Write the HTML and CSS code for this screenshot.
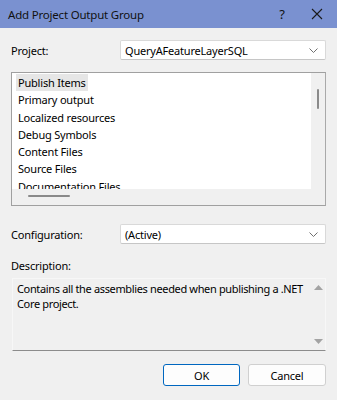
FILE: index.html
```html
<!DOCTYPE html>
<html>
<head>
<meta charset="utf-8">
<link rel="stylesheet" href="styles.css">
</head>
<body>
<div class="dialog">
  <div class="titlebar">
    <span class="title">Add Project Output Group</span>
    <span class="help">?</span>
    <span class="close"><svg width="12" height="12" viewBox="0 0 12 12"><path d="M1 1 L11 11 M11 1 L1 11" stroke="#1a1a1a" stroke-width="1.1" fill="none"/></svg></span>
  </div>
  <div class="content">
    <div class="row first">
      <span class="label">Project:</span>
      <div class="combo">
        <span class="combo-text">QueryAFeatureLayerSQL</span>
        <svg class="chev" width="9" height="5" viewBox="0 0 9 5"><path d="M0.5 0.5 L4.5 4.5 L8.5 0.5" stroke="#707070" stroke-width="1" fill="none"/></svg>
      </div>
    </div>
    <div class="listbox">
      <div class="list-main">
        <ul class="items">
          <li class="sel">Publish Items</li>
          <li>Primary output</li>
          <li>Localized resources</li>
          <li>Debug Symbols</li>
          <li>Content Files</li>
          <li>Source Files</li>
          <li>Documentation Files</li>
        </ul>
        <div class="vscroll"><div class="vthumb"></div></div>
      </div>
      <div class="hscroll"><div class="hthumb"></div></div>
    </div>
    <div class="row config">
      <span class="label">Configuration:</span>
      <div class="combo">
        <span class="combo-text">(Active)</span>
        <svg class="chev" width="9" height="5" viewBox="0 0 9 5"><path d="M0.5 0.5 L4.5 4.5 L8.5 0.5" stroke="#707070" stroke-width="1" fill="none"/></svg>
      </div>
    </div>
    <div class="desc-label">Description:</div>
    <div class="descbox">
      <div class="desc-text">Contains all the assemblies needed when publishing a .NET<br>Core project.</div>
      <div class="desc-scroll">
        <svg width="9" height="5" viewBox="0 0 9 5"><path d="M0 5 L4.5 0 L9 5 Z" fill="#a3a3a3"/></svg>
        <svg width="9" height="5" viewBox="0 0 9 5"><path d="M0 0 L4.5 5 L9 0 Z" fill="#a3a3a3"/></svg>
      </div>
    </div>
    <div class="buttons">
      <button class="btn ok">OK</button>
      <button class="btn">Cancel</button>
    </div>
  </div>
</div>
</body>
</html>
```
FILE: styles.css
```css
* { box-sizing: border-box; }
html, body { margin: 0; padding: 0; }
body {
  font-family: "Noto Sans", "Open Sans", sans-serif;
  font-size: 11px;
  letter-spacing: -0.2px;
  color: #000;
  background: #f0f0f0;
}
.dialog {
  width: 337px;
  height: 400px;
  background: #f0f0f0;
  display: flex;
  flex-direction: column;
}
.titlebar {
  height: 28px;
  background: #7a91d0;
  display: flex;
  align-items: center;
  padding-left: 8px;
  color: #111;
}
.title { flex: 1; font-size: 11.5px; }
.help { width: 20px; font-size: 13px; margin-right: 19px; text-align: center; }
.close { width: 12px; margin-right: 14px; display: flex; }
.content {
  padding: 0 11px 0 11px;
  display: flex;
  flex-direction: column;
}
.row { display: flex; align-items: center; height: 20px; }
.row.first { margin-top: 12px; }
.label { width: 109px; }
.combo {
  flex: 1;
  height: 20px;
  background: #fff;
  border: 1px solid #d9d9d9;
  border-bottom-color: #c6c6c6;
  display: flex;
  align-items: center;
  padding: 0 7px 0 4px;
  border-radius: 2px;
}
.combo-text { flex: 1; }
.listbox {
  margin-top: 12px;
  height: 134px;
  border: 1px solid #a0a0a0;
  border-right-color: #a9a9a9;
  display: flex;
  flex-direction: column;
  background: #f0f0f0;
}
.list-main { flex: 1; display: flex; overflow: hidden; }
.items {
  list-style: none;
  margin: 0;
  padding: 1px 0 0 4px;
  flex: 1;
  background: #fff;
  overflow: hidden;
}
.items li {
  height: 17.3px;
  line-height: 17px;
  padding-left: 2px;
  white-space: nowrap;
}
.items li.sel { background: #e6e6e6; width: 72px; }
.vscroll { width: 14px; background: #f0f0f0; position: relative; }
.vthumb { position: absolute; left: 6px; top: 16px; width: 2px; height: 20px; background: #8a8a8a; border-radius: 1px; }
.hscroll { height: 16px; background: #f0f0f0; position: relative; }
.hthumb { position: absolute; left: 16px; top: 6px; width: 42px; height: 2px; background: #8a8a8a; border-radius: 1px; }
.row.config { margin-top: 18px; }
.desc-label { margin-top: 13px; height: 17px; line-height: 17px; }
.descbox {
  margin-top: 4px;
  margin-left: 1px;
  height: 73px;
  display: flex;
  border: 1px solid #f7f7f7;
  border-bottom: 1px solid #8c8c8c;
}
.desc-text { flex: 1; padding: 2px 4px; line-height: 15px; white-space: nowrap; overflow: hidden; letter-spacing: -0.35px; }
.desc-scroll {
  width: 14px;
  display: flex;
  flex-direction: column;
  justify-content: space-between;
  align-items: center;
  padding: 6px 0 6px;
}
.buttons {
  margin-top: 13px;
  display: flex;
  justify-content: flex-end;
  gap: 8px;
}
.btn {
  font-family: inherit;
  font-size: 11px;
  letter-spacing: -0.2px;
  width: 78px;
  height: 22px;
  background: #fdfdfd;
  border: 1px solid #d0d0d0;
  border-radius: 3px;
  padding: 0;
  color: #000;
}
.btn.ok { border-color: #0067c0; width: 77px; }
```
